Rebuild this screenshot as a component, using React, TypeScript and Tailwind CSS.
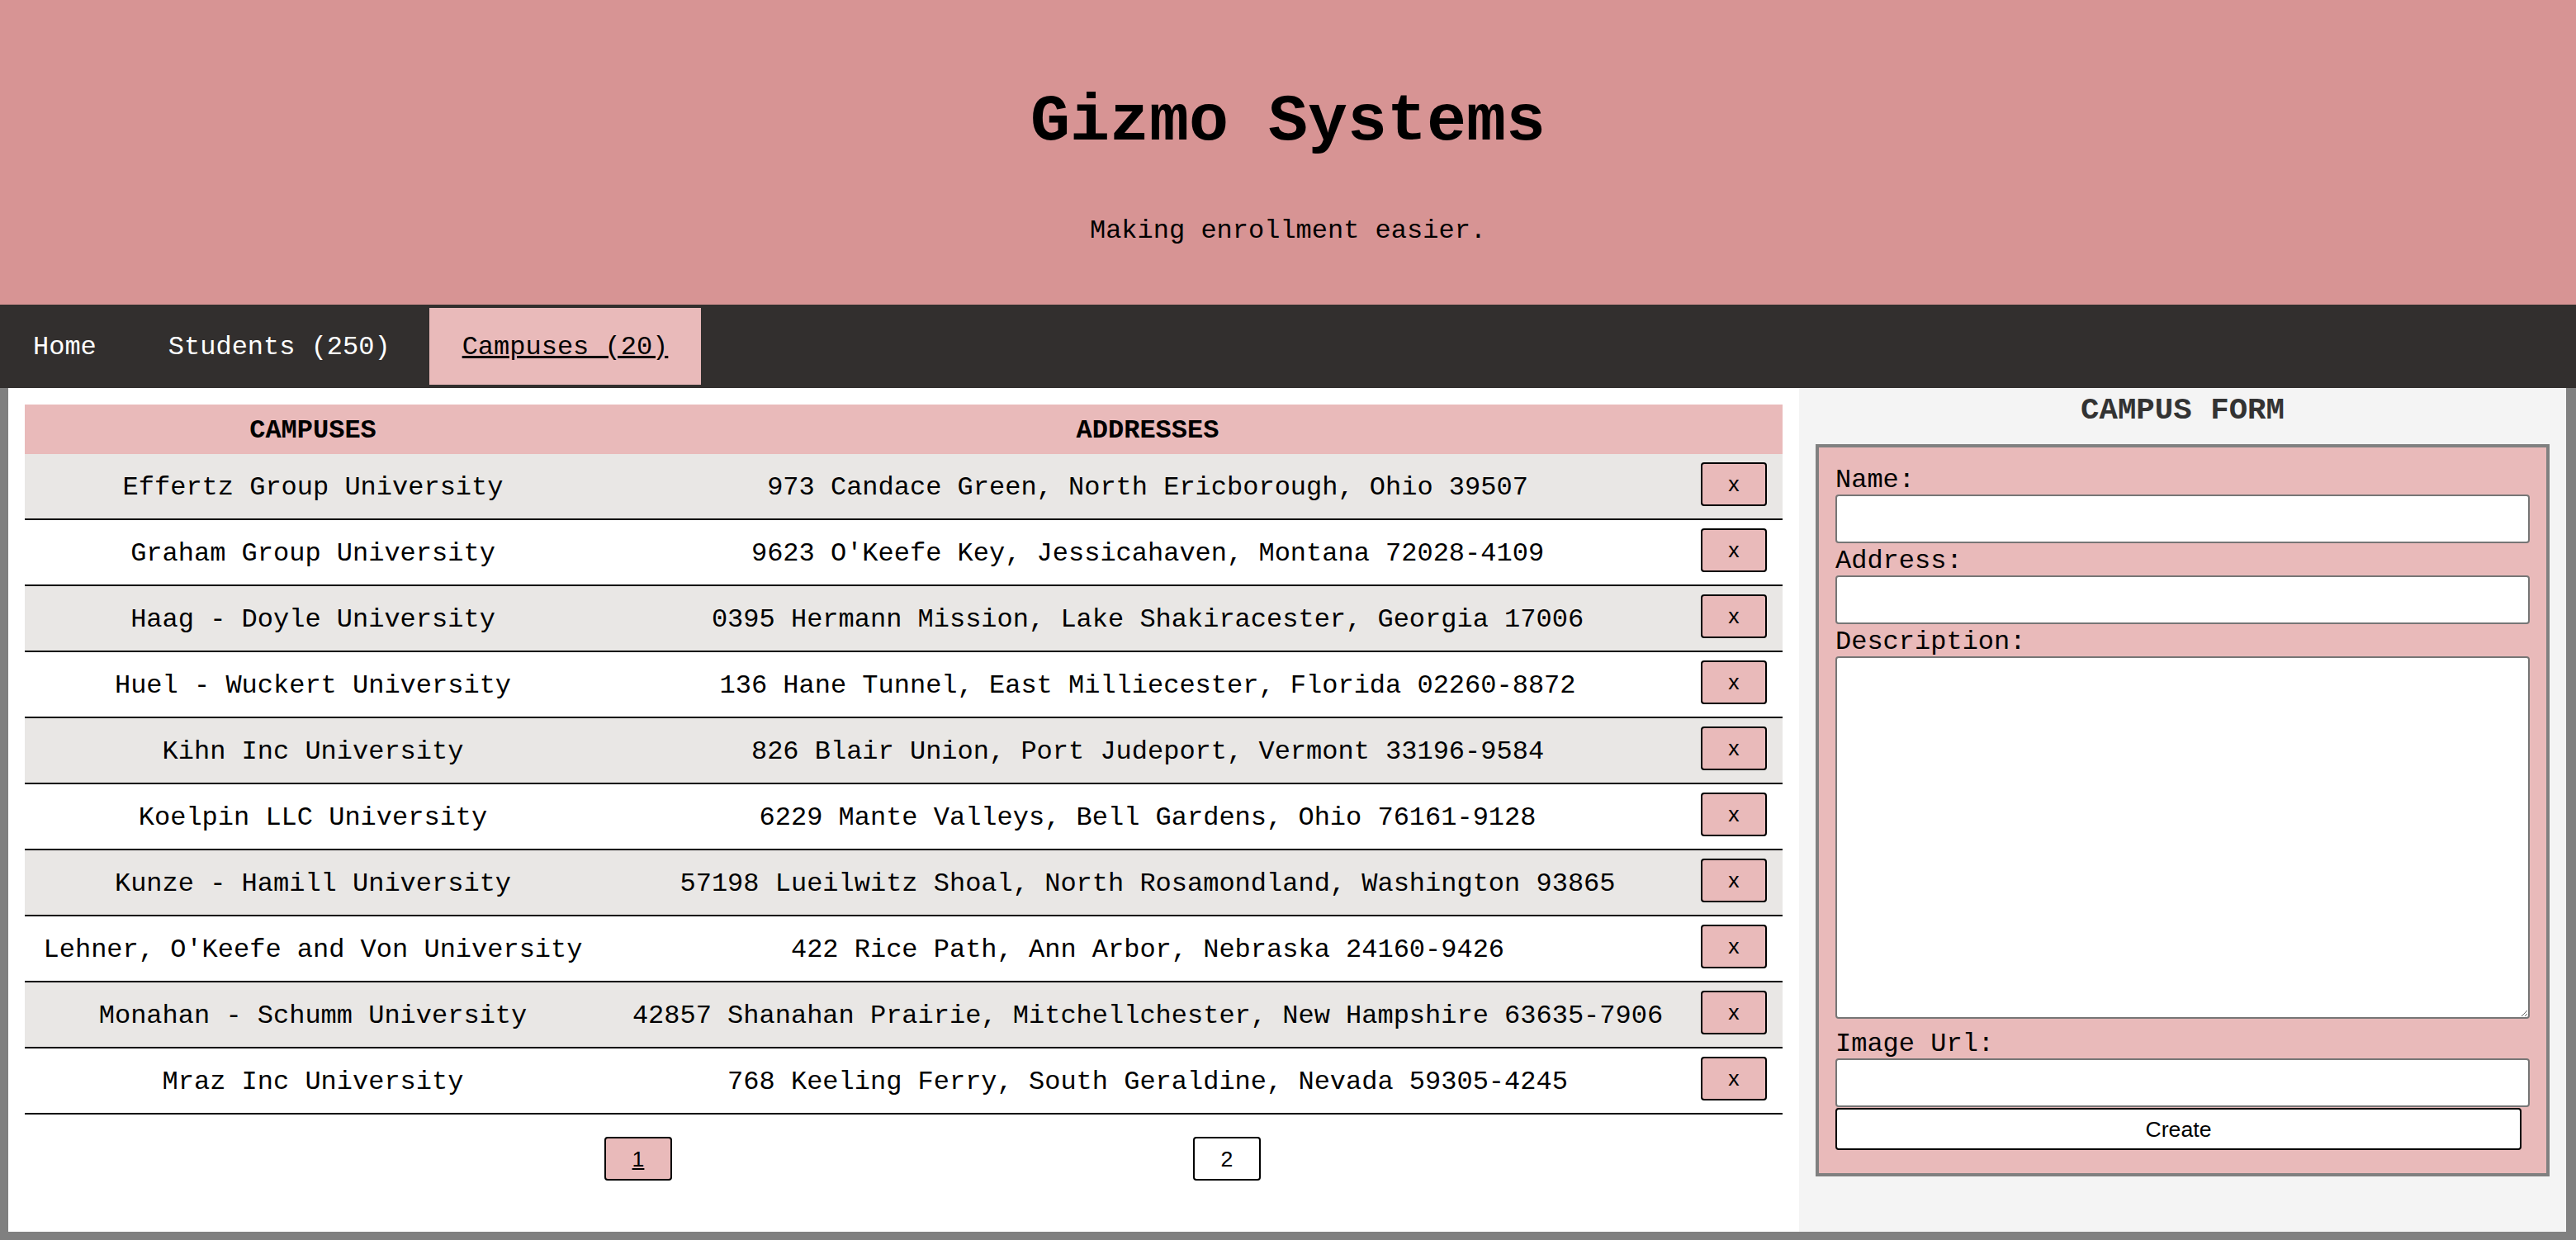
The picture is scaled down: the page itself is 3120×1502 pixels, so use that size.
import React from 'react';

const campuses = [
  { name: 'Effertz Group University', address: '973 Candace Green, North Ericborough, Ohio 39507' },
  { name: 'Graham Group University', address: "9623 O'Keefe Key, Jessicahaven, Montana 72028-4109" },
  { name: 'Haag - Doyle University', address: '0395 Hermann Mission, Lake Shakiracester, Georgia 17006' },
  { name: 'Huel - Wuckert University', address: '136 Hane Tunnel, East Milliecester, Florida 02260-8872' },
  { name: 'Kihn Inc University', address: '826 Blair Union, Port Judeport, Vermont 33196-9584' },
  { name: 'Koelpin LLC University', address: '6229 Mante Valleys, Bell Gardens, Ohio 76161-9128' },
  { name: 'Kunze - Hamill University', address: '57198 Lueilwitz Shoal, North Rosamondland, Washington 93865' },
  { name: "Lehner, O'Keefe and Von University", address: '422 Rice Path, Ann Arbor, Nebraska 24160-9426' },
  { name: 'Monahan - Schumm University', address: '42857 Shanahan Prairie, Mitchellchester, New Hampshire 63635-7906' },
  { name: 'Mraz Inc University', address: '768 Keeling Ferry, South Geraldine, Nevada 59305-4245' },
];

const mono = "font-['Liberation_Mono','Courier_New',monospace]";
const sans = "font-['Liberation_Sans',Arial,sans-serif]";

const Header: React.FC = () => (
  <header className="h-[369px] bg-[#d79494] flex flex-col items-center pt-[102px]">
    <h1 className="text-[80px] leading-[91px] font-bold text-black">Gizmo Systems</h1>
    <p className="mt-[69px] text-[32px] leading-[36px] text-black">Making enrollment easier.</p>
  </header>
);

const NavBar: React.FC = () => (
  <nav className="h-[101px] bg-[#322f2e] flex items-center gap-[7px] text-[32px] leading-[36px]">
    <a className="h-[93px] flex items-center pt-[3px] px-[40px] text-white">Home</a>
    <a className="h-[93px] flex items-center pt-[3px] px-[40px] text-white">Students (250)</a>
    <a className="h-[93px] flex items-center pt-[3px] px-[40px] bg-[#e9baba] text-black underline">Campuses (20)</a>
  </nav>
);

const CampusTable: React.FC = () => (
  <div className="flex-1 bg-white pt-[20px] px-[20px]">
    <div className="grid grid-cols-[698px_1324px_1fr] h-[60px] items-center pt-[3px] bg-[#e9baba] text-[32px] font-bold">
      <div className="text-center">CAMPUSES</div>
      <div className="text-center">ADDRESSES</div>
      <div />
    </div>
    {campuses.map((c, i) => (
      <div
        key={c.name}
        className={`grid grid-cols-[698px_1324px_1fr] h-[80px] items-center border-b-2 border-black text-[32px] leading-[36px] ${
          i % 2 === 0 ? 'bg-[#e9e7e5]' : 'bg-white'
        }`}
      >
        <div className="text-center whitespace-nowrap pt-[4px]">{c.name}</div>
        <div className="text-center whitespace-nowrap pt-[4px]">{c.address}</div>
        <div className="pl-[8px] pb-[6px]">
          <button className={`w-[80px] h-[53px] rounded-[4px] border-2 border-black bg-[#e9baba] ${sans} text-[26.67px]`}>
            x
          </button>
        </div>
      </div>
    ))}
    <div className="flex gap-[631px] pl-[702px] mt-[27px]">
      <button className={`w-[82px] h-[53px] rounded-[4px] border-2 border-black bg-[#e9baba] ${sans} text-[26.67px] underline`}>
        1
      </button>
      <button className={`w-[82px] h-[53px] rounded-[4px] border-2 border-black bg-white ${sans} text-[26.67px]`}>
        2
      </button>
    </div>
  </div>
);

const CampusForm: React.FC = () => (
  <div className="w-[929px] bg-[#f4f4f4] pt-[6px]">
    <h3 className="text-center text-[37.44px] leading-[42px] font-bold text-[#333333]">CAMPUS FORM</h3>
    <form className="mx-[20px] mt-[20px] border-4 border-[#808080] bg-[#e9baba] px-[20px] pt-[18px] pb-[28px]">
      <label className="block h-[39px] pt-[2px] leading-[39px] text-[32px]">Name:</label>
      <input className="block w-full h-[59px] bg-white border-2 border-[#767676] rounded-[4px]" />
      <label className="block h-[39px] pt-[2px] leading-[39px] text-[32px]">Address:</label>
      <input className="block w-full h-[59px] bg-white border-2 border-[#767676] rounded-[4px]" />
      <label className="block h-[39px] pt-[2px] leading-[39px] text-[32px]">Description:</label>
      <textarea className="block w-full h-[439px] bg-white border-2 border-[#767676] rounded-[4px] mb-[9px]" />
      <label className="block h-[39px] pt-[2px] leading-[39px] text-[32px]">Image Url:</label>
      <input className="block w-full h-[59px] bg-white border-2 border-[#767676] rounded-[4px]" />
      <button
        type="button"
        className={`block w-[831px] h-[51px] mt-[1px] bg-white border-2 border-black rounded-[4px] ${sans} text-[26.67px]`}
      >
        Create
      </button>
    </form>
  </div>
);

export default function App() {
  return (
    <div className={`w-[3120px] ${mono} text-black`}>
      <Header />
      <NavBar />
      <main className="h-[1032px] flex border-l-[10px] border-r-[12px] border-b-[10px] border-[#808080]">
        <CampusTable />
        <CampusForm />
      </main>
    </div>
  );
}
